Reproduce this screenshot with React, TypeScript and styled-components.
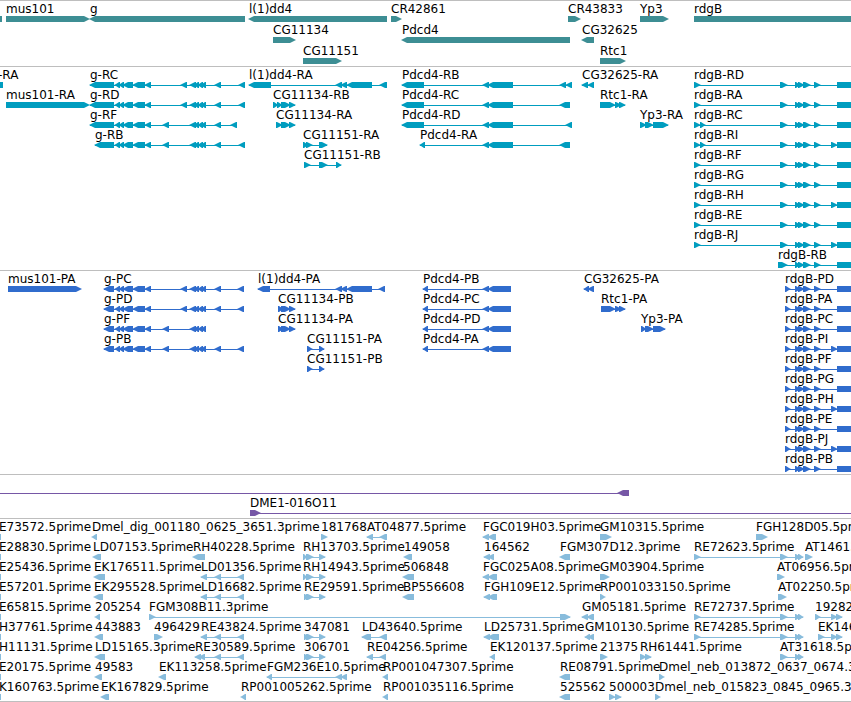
import React from "react";
import styled, { createGlobalStyle } from "styled-components";

type Strand = "+" | "-" | "none";
type Block = [number, number];

interface Feature {
  label: string;
  strand: Strand;
  blocks: Block[];
  /* Start of the label when it differs from the first block. */
  at?: number;
  /* Stretch of connector drawn past the blocks. */
  span?: Block;
}

interface TrackData {
  name: string;
  color: string;
  gap?: number;
  rows: Feature[][];
}

const GLYPH_HEIGHT = 6;
const HEAD = 6;

const GlobalStyle = createGlobalStyle`
  body {
    margin: 0;
    background: #ffffff;
    color: #000000;
    font-family: "DejaVu Sans", sans-serif;
    font-size: 12px;
  }
`;

const Browser = styled.main`
  display: flex;
  flex-direction: column;
  overflow: hidden;
  border-bottom: 1px solid #bebebe;
`;

const Track = styled.section<{ $color: string; $gap: number }>`
  display: flex;
  flex-direction: column;
  gap: ${(p) => p.$gap}px;
  padding: 1px 0 2px;
  border-top: 1px solid #bebebe;
  color: ${(p) => p.$color};

  &:last-child {
    padding-bottom: 1px;
  }
`;

const Row = styled.ul`
  position: relative;
  height: 20px;
  margin: 0;
  padding: 0;
  list-style: none;
`;

const Item = styled.li`
  position: absolute;
  bottom: 0;
  display: flex;
  flex-direction: column;
  white-space: nowrap;
`;

const Label = styled.span`
  color: #000000;
  line-height: 14px;
`;

const Glyph = styled.svg`
  display: block;
  width: 1px;
  height: 6px;
  overflow: visible;
  fill: currentColor;
`;

function blockPath([start, end]: Block, strand: Strand, origin: number): string {
  const s = start - origin;
  const e = end - origin;
  const h = GLYPH_HEIGHT;
  const mid = h / 2;
  if (strand === "none") return `M${s} 0H${e}V${h}H${s}Z`;
  const head = Math.min(HEAD, e - s) - 1;
  return strand === "+"
    ? `M${s} 0H${e - head}L${e - 1} 2L${e + 1} ${mid}L${e - 1} 4L${e - head} ${h}H${s}Z`
    : `M${e} 0H${s + head}L${s + 1} 2L${s - 1} ${mid}L${s + 1} 4L${s + head} ${h}H${e}Z`;
}

function FeatureItem({ feature }: { feature: Feature }) {
  const { label, strand, blocks, span } = feature;
  const origin = feature.at ?? blocks[0][0];
  const from = span ? span[0] : blocks[0][0];
  const to = span ? span[1] : blocks[blocks.length - 1][1];
  return (
    <Item style={{ left: origin }}>
      {label && <Label>{label}</Label>}
      <Glyph aria-hidden="true">
        {(blocks.length > 1 || span) && (
          <rect x={from - origin} y={3} width={to - from} height={1} />
        )}
        {blocks.map((b, i) => (
          <path key={i} d={blockPath(b, strand, origin)} />
        ))}
      </Glyph>
    </Item>
  );
}

const fwd = (label: string, ...blocks: Block[]): Feature => ({ label, strand: "+", blocks });
const rev = (label: string, ...blocks: Block[]): Feature => ({ label, strand: "-", blocks });
/* A feature that began to the left of the visible region. */
const edge = (label: string, at = -1, end = 1): Feature => ({
  label,
  strand: "none",
  at,
  blocks: [[-12, end]],
});

const G_CORE: Block[] = [[115, 120], [119, 124], [123, 133], [133, 145], [145, 151]];
const G_FOUR: Block[] = [[190, 196], [194, 199], [198, 203], [201, 206]];
const RDGB: Block[] = [[780, 787], [795, 800], [798, 804], [803, 810], [814, 820]];
const RDGB_CDS: Block[] = [[785, 790], [795, 800], [798, 804], [803, 810], [814, 820]];
const RDGB_END: Block[] = [[837, 1000]];
const RDGB_ALT: Block = [831, 837];
const DD4: Block[] = [[336, 342], [341, 347], [347, 372]];
const PDCD4: Block[] = [[483, 489], [488, 513]];
const PDCD4_CDS: Block[] = [[423, 428], [483, 489], [488, 511]];

const rdgbR = (id: string, second = false, alt = false): Feature =>
  fwd(
    `rdgB-R${id}`,
    [694, 700],
    ...(second ? ([[700, 705]] as Block[]) : []),
    ...RDGB,
    ...(alt ? [RDGB_ALT] : []),
    ...RDGB_END
  );
const rdgbP = (id: string, alt = false): Feature =>
  fwd(`rdgB-P${id}`, ...RDGB_CDS, ...(alt ? [RDGB_ALT] : []), ...RDGB_END);

const re72 = (label: string): Feature =>
  fwd(label, [694, 700], [780, 787], [795, 800], [798, 803]);
const rh30 = (label: string, x = 303): Feature =>
  fwd(label, [x, x + 4], [306, 313], [319, 325]);
const ld20 = (label: string): Feature => rev(label, [201, 207], [215, 221], [238, 244]);

const tracks: TrackData[] = [
  {
    name: "Genes",
    color: "#3d8e94",
    gap: 1,
    rows: [
      [
        edge("", 0, 2),
        fwd("mus101", [6, 89]),
        rev("g", [90, 245]),
        rev("l(1)dd4", [249, 387]),
        fwd("CR42861", [391, 401]),
        fwd("CR43833", [568, 580]),
        fwd("Yp3", [640, 668]),
        fwd("rdgB", [694, 1000]),
      ],
      [fwd("CG11134", [273, 295]), rev("Pdcd4", [402, 570]), rev("CG32625", [582, 594])],
      [fwd("CG11151", [303, 341]), fwd("Rtc1", [600, 625])],
    ],
  },
  {
    name: "Transcripts",
    color: "#009dbf",
    rows: [
      [
        edge("-RA", -2, 3),
        rev("g-RC", [90, 114], ...G_CORE, [181, 187], ...G_FOUR, [215, 221], [239, 245]),
        rev("l(1)dd4-RA", [249, 271], ...DD4, [380, 387]),
        rev("Pdcd4-RB", [402, 424], ...PDCD4, [560, 566], [566, 572]),
        rev("CG32625-RA", [582, 588], [588, 594]),
        rdgbR("D"),
      ],
      [
        fwd("mus101-RA", [6, 89]),
        rev("g-RD", [90, 114], ...G_CORE, [181, 187], ...G_FOUR, [215, 221], [239, 245]),
        fwd("CG11134-RB", [273, 278], [277, 282], [281, 290], [289, 295]),
        rev("Pdcd4-RC", [402, 424], ...PDCD4, [560, 570]),
        fwd("Rtc1-RA", [600, 615], [615, 621], [619, 625]),
        rdgbR("A"),
      ],
      [
        rev("g-RF", [90, 114], ...G_CORE, [163, 169], ...G_FOUR, [215, 221], [231, 237]),
        fwd("CG11134-RA", [276, 282], [281, 290], [289, 295]),
        rev("Pdcd4-RD", [402, 424], ...PDCD4, [566, 572]),
        fwd("Yp3-RA", [640, 646], [645, 653], [653, 668]),
        rdgbR("C", true),
      ],
      [
        rev("g-RB", [95, 114], ...G_CORE, [163, 169], ...G_FOUR, [215, 221], [239, 245]),
        fwd("CG11151-RA", [303, 308], [306, 312], [319, 327]),
        rev("Pdcd4-RA", [420, 425], ...PDCD4, [560, 570]),
        rdgbR("I", true, true),
      ],
      [fwd("CG11151-RB", [304, 310], [319, 327], [336, 341]), rdgbR("F")],
      [rdgbR("G")],
      [rdgbR("H", false, true)],
      [rdgbR("E")],
      [rdgbR("J", false, true)],
      [fwd("rdgB-RB", [778, 787], ...RDGB.slice(1), ...RDGB_END)],
    ],
  },
  {
    name: "Proteins",
    color: "#306ccd",
    rows: [
      [
        fwd("mus101-PA", [8, 81]),
        rev("g-PC", [104, 114], ...G_CORE, [181, 187], ...G_FOUR, [215, 221], [238, 244]),
        rev("l(1)dd4-PA", [258, 270], ...DD4, [379, 385]),
        rev("Pdcd4-PB", ...PDCD4_CDS),
        rev("CG32625-PA", [584, 589], [588, 594]),
        rdgbP("D"),
      ],
      [
        rev("g-PD", [104, 114], ...G_CORE, [181, 187], ...G_FOUR, [215, 221], [238, 244]),
        fwd("CG11134-PB", [278, 283], [281, 290], [289, 295]),
        rev("Pdcd4-PC", ...PDCD4_CDS),
        fwd("Rtc1-PA", [601, 615], [615, 621], [619, 625]),
        rdgbP("A"),
      ],
      [
        rev("g-PF", [104, 114], ...G_CORE, [163, 169], ...G_FOUR),
        fwd("CG11134-PA", [278, 283], [281, 290], [289, 295]),
        rev("Pdcd4-PD", ...PDCD4_CDS),
        fwd("Yp3-PA", [641, 646], [645, 653], [653, 665]),
        rdgbP("C"),
      ],
      [
        rev("g-PB", [104, 114], ...G_CORE, [163, 169], ...G_FOUR, [215, 221], [238, 244]),
        fwd("CG11151-PA", [307, 312], [319, 324]),
        rev("Pdcd4-PA", ...PDCD4_CDS),
        rdgbP("I", true),
      ],
      [fwd("CG11151-PB", [307, 312], [319, 324]), rdgbP("F")],
      [rdgbP("G")],
      [rdgbP("H", true)],
      [rdgbP("E")],
      [rdgbP("J", true)],
      [rdgbP("B")],
    ],
  },
  {
    name: "BAC ends",
    color: "#7657a6",
    rows: [
      [{ label: "", strand: "-", at: 0, blocks: [[618, 629]], span: [0, 629] }],
      [{ label: "DME1-016O11", strand: "+", blocks: [[250, 260]], span: [250, 4000] }],
    ],
  },
  {
    name: "ESTs",
    color: "#88bcdc",
    rows: [
      [
        edge("E73572.5prime"),
        rev("Dmel_dig_001180_0625_3651.3prime", [92, 97]),
        fwd("181768", [321, 327]),
        rev("AT04877.5prime", [367, 373], [380, 387]),
        rev("FGC019H03.5prime", [483, 489], [488, 496]),
        fwd("GM10315.5prime", [600, 611]),
        fwd("FGH128D05.5prime", [756, 767]),
      ],
      [
        edge("E28830.5prime"),
        rev("LD07153.5prime", [93, 101]),
        rev("RH40228.5prime", [193, 205]),
        rh30("RH13703.5prime"),
        rev("149058", [404, 412]),
        rev("164562", [484, 490], [488, 494]),
        rev("FGM307D12.3prime", [560, 570]),
        re72("RE72623.5prime"),
        fwd("AT14613.5prime", [805, 812]),
      ],
      [
        edge("E25436.5prime"),
        rev("EK176511.5prime", [94, 105]),
        ld20("LD01356.5prime"),
        rh30("RH14943.5prime"),
        rev("506848", [403, 414]),
        rev("FGC025A08.5prime", [483, 489], [488, 497]),
        fwd("GM03904.5prime", [600, 609]),
        fwd("AT06956.5prime", [777, 784]),
      ],
      [
        edge("E57201.5prime"),
        rev("EK295528.5prime", [94, 103]),
        ld20("LD16682.5prime"),
        rh30("RE29591.5prime", 304),
        rev("BP556608", [403, 414]),
        rev("FGH109E12.5prime", [484, 490], [488, 497]),
        fwd("RP001033150.5prime", [600, 605]),
        fwd("AT02250.5prime", [778, 786]),
      ],
      [
        edge("E65815.5prime"),
        rev("205254", [95, 100]),
        fwd("FGM308B11.3prime", [149, 155], [560, 570]),
        rev("GM05181.5prime", [582, 588], [587, 594]),
        re72("RE72737.5prime"),
        fwd("19282", [815, 820], [831, 837], [836, 842]),
      ],
      [
        edge("H37761.5prime"),
        rev("443883", [95, 103]),
        fwd("496429", [154, 162]),
        ld20("RE43824.5prime"),
        rh30("347081", 304),
        rev("LD43640.5prime", [362, 371], [380, 387]),
        rev("LD25731.5prime", [484, 490], [488, 499]),
        rev("GM10130.5prime", [585, 590], [588, 594]),
        re72("RE74285.5prime"),
        fwd("EK146", [818, 824], [831, 837], [836, 842]),
      ],
      [
        edge("H11131.5prime"),
        rev("LD15165.3prime", [95, 105]),
        rev("RE30589.5prime", [195, 201], [199, 205], [215, 221], [238, 244]),
        rh30("306701", 304),
        rev("RE04256.5prime", [367, 373], [380, 386]),
        rev("EK120137.5prime", [490, 495]),
        fwd("21375", [600, 607]),
        fwd("RH61441.5prime", [640, 646], [645, 651]),
        fwd("AT31618.5prime", [780, 787], [795, 800], [798, 803]),
      ],
      [
        edge("E20175.5prime"),
        rev("49583", [95, 102]),
        rev("EK113258.5prime", [159, 166]),
        rev("FGM236E10.5prime", [267, 272], [336, 342], [341, 347]),
        rev("RP001047307.5prime", [383, 388]),
        rev("RE08791.5prime", [560, 570]),
        fwd("Dmel_neb_013872_0637_0674.3prime", [659, 664]),
      ],
      [
        edge("K160763.5prime"),
        rev("EK167829.5prime", [101, 109]),
        rev("RP001005262.5prime", [241, 246]),
        rev("RP001035116.5prime", [383, 388]),
        rev("525562", [560, 570]),
        fwd("500003", [609, 615], [615, 621]),
        fwd("Dmel_neb_015823_0845_0965.3prime", [655, 660]),
      ],
    ],
  },
];

export default function App() {
  return (
    <>
      <GlobalStyle />
      <Browser>
        {tracks.map((track) => (
          <Track
            key={track.name}
            aria-label={track.name}
            $color={track.color}
            $gap={track.gap ?? 0}
          >
            {track.rows.map((row, i) => (
              <Row key={i}>
                {row.map((feature, j) => (
                  <FeatureItem key={j} feature={feature} />
                ))}
              </Row>
            ))}
          </Track>
        ))}
      </Browser>
    </>
  );
}
